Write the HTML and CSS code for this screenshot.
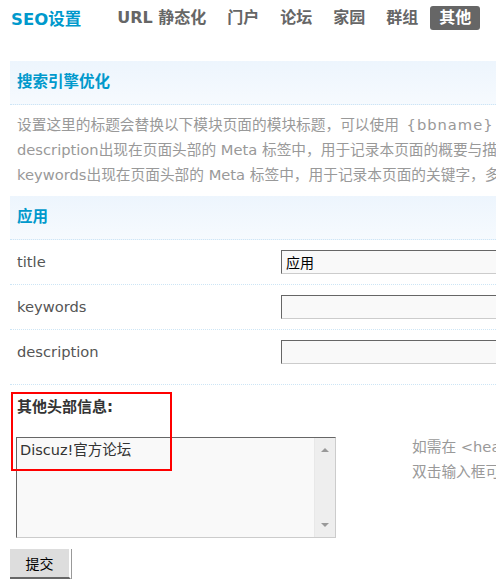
FILE: index.html
```html
<!DOCTYPE html>
<html lang="zh-CN">
<head>
  <meta charset="UTF-8" />
  <title>SEO设置</title>
  <link rel="stylesheet" href="styles.css">
</head>
<body>
  <div class="nav">
    <h2 class="nav-title">SEO设置</h2>
    <ul class="tabs">
      <li><a href="#">URL 静态化</a></li>
      <li><a href="#">门户</a></li>
      <li><a href="#">论坛</a></li>
      <li><a href="#">家园</a></li>
      <li><a href="#">群组</a></li>
      <li class="current"><a href="#">其他</a></li>
    </ul>
  </div>

  <div class="main">
    <div class="section-head">搜索引擎优化</div>
    <div class="tips">
      <p>设置这里的标题会替换以下模块页面的模块标题，可以使用 <span class="var">{bbname}</span> 代表站点名称</p>
      <p>description出现在页面头部的 Meta 标签中，用于记录本页面的概要与描述</p>
      <p>keywords出现在页面头部的 Meta 标签中，用于记录本页面的关键字，多个关键字间请用半角逗号 "," 隔开</p>
    </div>

    <div class="section-head">应用</div>
    <div class="row">
      <label class="row-label">title</label>
      <input class="txt" type="text" value="应用">
    </div>
    <div class="row">
      <label class="row-label">keywords</label>
      <input class="txt" type="text" value="">
    </div>
    <div class="row last">
      <label class="row-label">description</label>
      <input class="txt" type="text" value="">
    </div>

    <div class="extra">
      <div class="extra-title">其他头部信息:</div>
      <div class="extra-body">
        <div class="area">
          <textarea rows="5">Discuz!官方论坛</textarea>
          <div class="scrollbar">
            <span class="arrow up"></span>
            <span class="arrow down"></span>
          </div>
        </div>
        <div class="extra-tip">
          <p>如需在 &lt;head&gt;&lt;/head&gt; 中添加其他的 HTML 代码，可以使用本设置</p>
          <p>双击输入框可扩大/缩小</p>
        </div>
      </div>
      <div class="mark"></div>
    </div>

    <button class="btn" type="submit">提交</button>
  </div>
</body>
</html>
```

FILE: styles.css
```css
html, body {
  overflow: hidden;
}
body {
  margin: 0;
  width: 900px;
  font-family: "DejaVu Sans", "Noto Sans CJK SC", sans-serif;
  font-size: 14.7px;
  color: #666;
  background: #fff;
}
p {
  margin: 0;
}
.nav {
  display: flex;
  align-items: center;
  height: 36px;
  padding-left: 11px;
}
.nav-title {
  margin: 0 27px 0 0;
  font-size: 16.5px;
  font-weight: bold;
  color: #09c;
}
.tabs {
  display: flex;
  list-style: none;
  margin: 0;
  padding: 0;
}
.tabs li {
  margin-right: 3px;
}
.tabs a {
  display: block;
  padding: 0 9px;
  line-height: 24px;
  font-size: 16px;
  font-weight: bold;
  color: #666;
  text-decoration: none;
  border-radius: 3px;
}
.tabs .current a {
  background: #666;
  color: #fff;
}
.main {
  margin-left: 10px;
  padding-top: 25px;
}
.section-head {
  height: 43px;
  line-height: 43px;
  padding-left: 7px;
  background: linear-gradient(#edf5fd, #f6fafe);
  border-bottom: 1px dotted #cde5f5;
  font-weight: bold;
  font-size: 15.5px;
  color: #09c;
}
.tips {
  padding: 7px 7px 9px;
  line-height: 25px;
  color: #999;
  white-space: nowrap;
}
.var {
  padding: 0 3px;
  letter-spacing: 1px;
}
.row {
  display: flex;
  align-items: flex-start;
  height: 44px;
  border-bottom: 1px dotted #cde5f5;
}
.row.last {
  height: 54px;
}
.row-label {
  width: 264px;
  padding-left: 7px;
  line-height: 44px;
  color: #555;
}
.txt {
  margin-top: 10px;
  width: 320px;
  height: 24px;
  box-sizing: border-box;
  padding: 0 4px;
  border: 1px solid #ccc;
  border-top-color: #666;
  border-left-color: #666;
  background: #f9f9f9;
  font-family: "Noto Sans CJK SC", sans-serif;
  font-size: 14px;
  color: #000;
}
.extra {
  position: relative;
  padding: 10px 0 0 7px;
}
.extra-title {
  font-weight: bold;
  font-size: 15px;
  color: #333;
  line-height: 25px;
}
.extra-body {
  display: flex;
  margin-top: 17px;
}
.area {
  display: flex;
  width: 320px;
  height: 101px;
  box-sizing: border-box;
  margin-left: -1px;
  border: 1px solid #ccc;
  border-top-color: #666;
  border-left-color: #666;
  background: #f9f9f9;
}
.area textarea {
  flex: 1;
  border: 0;
  margin: 0;
  padding: 0 3px;
  resize: none;
  overflow: hidden;
  background: transparent;
  font-family: "DejaVu Sans", "Noto Sans CJK SC", sans-serif;
  font-size: 14.5px;
  color: #333;
  outline: none;
}
.scrollbar {
  width: 20px;
  border-left: 1px solid #e8e8e8;
  background: #eee;
  display: flex;
  flex-direction: column;
  justify-content: space-between;
  align-items: center;
  padding: 10px 0 10px;
}
.arrow {
  width: 0;
  height: 0;
  border-left: 4px solid transparent;
  border-right: 4px solid transparent;
}
.arrow.up {
  border-bottom: 4px solid #999;
}
.arrow.down {
  border-top: 4px solid #999;
}
.extra-tip {
  margin: -3px 0 0 76px;
  line-height: 25px;
  color: #999;
  white-space: nowrap;
}
.mark {
  position: absolute;
  left: 1px;
  top: 7px;
  width: 157px;
  height: 75px;
  border: 2px solid #f00;
}
.btn {
  display: block;
  margin-top: 11px;
  width: 61px;
  height: 30px;
  padding: 0;
  background: #ddd;
  border: 0;
  border-right: 2px solid #fff;
  border-bottom: 2px solid #666;
  box-shadow: 1px 0 0 #999;
  font-family: "Noto Sans CJK SC", sans-serif;
  font-size: 14px;
  color: #000;
  cursor: pointer;
}
```
